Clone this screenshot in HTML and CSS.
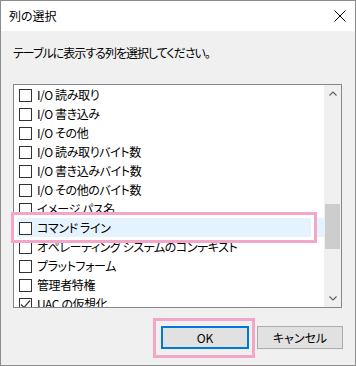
FILE: index.html
```html
<!DOCTYPE html>
<html lang="ja">
<head>
<meta charset="utf-8">
<link rel="stylesheet" href="styles.css">
</head>
<body>
<div class="window">
  <div class="titlebar">
    <span class="title">列の選択</span>
    <svg class="close" width="12" height="12" viewBox="0 0 12 12"><path d="M0.5 0.5 L11.5 11.5 M11.5 0.5 L0.5 11.5" stroke="#000" stroke-width="1" fill="none"/></svg>
  </div>
  <div class="content">
    <p class="prompt">テーブルに表示する列を選択してください。</p>
    <div class="list">
      <div class="items">
        <div class="row"><span class="cb"></span><span class="label">I/O 読み取り</span></div>
        <div class="row"><span class="cb"></span><span class="label">I/O 書き込み</span></div>
        <div class="row"><span class="cb"></span><span class="label">I/O その他</span></div>
        <div class="row"><span class="cb"></span><span class="label">I/O 読み取りバイト数</span></div>
        <div class="row"><span class="cb"></span><span class="label">I/O 書き込みバイト数</span></div>
        <div class="row"><span class="cb"></span><span class="label">I/O その他のバイト数</span></div>
        <div class="row"><span class="cb"></span><span class="label">イメージ パス名</span></div>
        <div class="row selected"><span class="cb"></span><span class="label">コマンド ライン</span></div>
        <div class="row"><span class="cb"></span><span class="label">オペレーティング システムのコンテキスト</span></div>
        <div class="row"><span class="cb"></span><span class="label">プラットフォーム</span></div>
        <div class="row"><span class="cb"></span><span class="label">管理者特権</span></div>
        <div class="row"><span class="cb checked"><svg width="11" height="11" viewBox="0 0 11 11"><path d="M1 5.5 L4 8.5 L10 1.5" stroke="#333" stroke-width="1.2" fill="none"/></svg></span><span class="label">UAC の仮想化</span></div>
      </div>
      <div class="scrollbar">
        <div class="arrow"><svg width="8" height="5" viewBox="0 0 8 5"><path d="M0.5 4.5 L4 1 L7.5 4.5" stroke="#606060" stroke-width="1.2" fill="none"/></svg></div>
        <div class="track"><div class="thumb"></div></div>
        <div class="arrow"><svg width="8" height="5" viewBox="0 0 8 5"><path d="M0.5 0.5 L4 4 L7.5 0.5" stroke="#606060" stroke-width="1.2" fill="none"/></svg></div>
      </div>
    </div>
    <div class="buttons">
      <button class="btn default">OK</button>
      <button class="btn">キャンセル</button>
    </div>
  </div>
  <div class="mark mark-row"></div>
  <div class="mark mark-ok"></div>
</div>
</body>
</html>
```
FILE: styles.css
```css
* { box-sizing: border-box; }
html, body { margin: 0; padding: 0; }
body {
  font-family: "Noto Sans CJK JP", "Noto Sans", sans-serif;
  font-size: 12px;
  color: #000;
  background: #f0f0f0;
}
.window {
  position: relative;
  width: 356px;
  height: 366px;
  border: 1px solid #8c8c8c;
  background: #f0f0f0;
  overflow: hidden;
}
.titlebar {
  height: 30px;
  background: #fff;
  display: flex;
  align-items: center;
  justify-content: space-between;
  padding: 0 9px 0 8px;
}
.title {
  font-size: 12px;
  line-height: 16px;
  font-feature-settings: "palt";
}
.close { display: block; }
.content {
  padding: 14px 13px 0 12px;
}
.prompt {
  margin: 0 0 23px 0;
  line-height: 16px;
  font-feature-settings: "palt";
  letter-spacing: -1px;
}
.list {
  display: flex;
  width: 329px;
  height: 224px;
  border: 1px solid #828790;
  background: #fff;
}
.items {
  flex: 1;
  overflow: hidden;
}
.row {
  height: 19px;
  display: flex;
  align-items: center;
  padding-left: 5px;
  gap: 5px;
  white-space: nowrap;
}
.row.selected { background: #e5f3ff; }
.cb {
  width: 13px;
  height: 13px;
  border: 1px solid #333;
  background: #fff;
  flex: none;
  display: flex;
  align-items: center;
  justify-content: center;
  margin-top: 1px;
}
.cb svg { display: block; }
.label {
  line-height: 16px;
  font-feature-settings: "palt";
  letter-spacing: -0.4px;
}
.scrollbar {
  width: 17px;
  flex: none;
  display: flex;
  flex-direction: column;
  background: #f0f0f0;
}
.arrow {
  height: 17px;
  display: flex;
  align-items: center;
  justify-content: center;
}
.track {
  flex: 1;
  padding-top: 102px;
}
.thumb {
  height: 45px;
  margin: 0 1px;
  background: #cdcdcd;
}
.buttons {
  display: flex;
  justify-content: flex-end;
  gap: 8px;
  margin-top: 18px;
  margin-right: -1px;
}
.btn {
  font-family: inherit;
  font-size: 12px;
  height: 23px;
  width: 86px;
  padding: 0;
  background: #e1e1e1;
  border: 1px solid #adadad;
  color: #000;
  line-height: 16px;
  font-feature-settings: "palt";
}
.btn.default {
  width: 88px;
  border: 2px solid #0078d7;
}
.mark {
  position: absolute;
  border: 3px solid #f4a6c8;
}
.mark-row {
  left: 10px;
  top: 211px;
  width: 306px;
  height: 31px;
  box-shadow: inset 0 0 0 3px #fff;
}
.mark-ok {
  left: 152px;
  top: 317px;
  width: 102px;
  height: 40px;
}
```
